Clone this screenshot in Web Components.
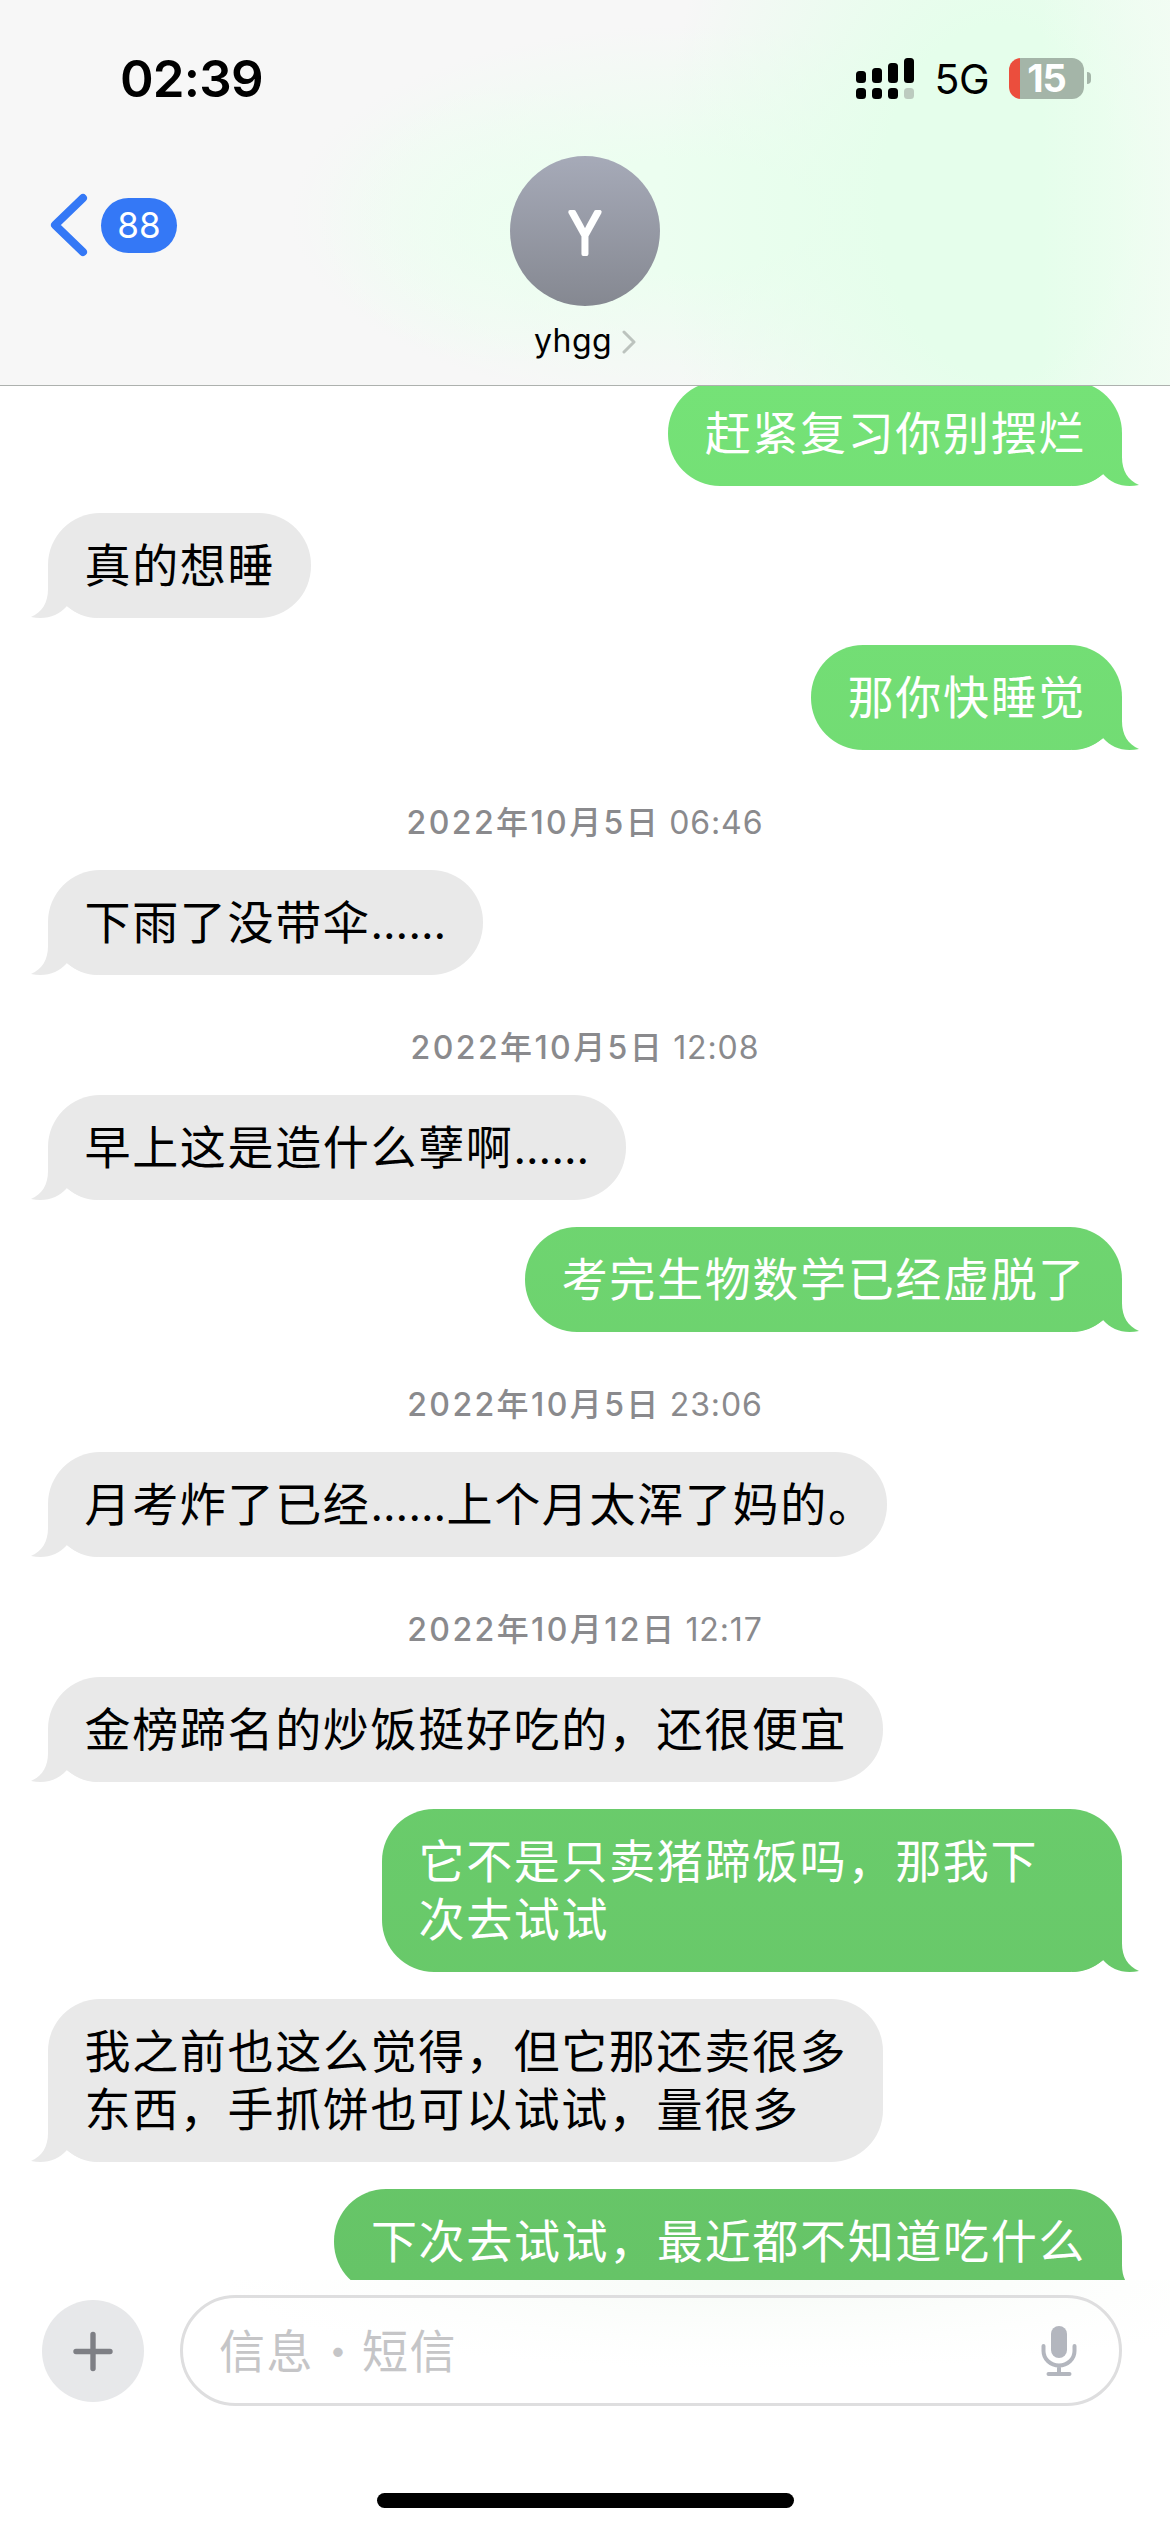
<!DOCTYPE html>
<html lang="zh-CN">
<head>
<meta charset="utf-8">
<title>yhgg</title>
<style>
  html, body { margin: 0; padding: 0; }
  body {
    width: 1170px;
    height: 2532px;
    overflow: hidden;
    background: #fff;
    color: #000;
    font-family: Inter, "Noto Sans CJK SC", sans-serif;
    -webkit-font-smoothing: antialiased;
  }
  chat-bubble i { font-style: normal; font-size: 43.5px; line-height: 0; letter-spacing: .4px; }
</style>
</head>
<body>
<message-screen>
  <status-bar slot="header" time="02:39" network="5G" battery="15"></status-bar>
  <contact-bar slot="header" unread="88" initial="Y" name="yhgg"></contact-bar>

  <chat-bubble from="me">赶紧复习你别摆烂</chat-bubble>
  <chat-bubble>真的想睡</chat-bubble>
  <chat-bubble from="me">那你快睡觉</chat-bubble>
  <chat-time time="06:46">2022年10月5日</chat-time>
  <chat-bubble>下雨了没带伞<i>……</i></chat-bubble>
  <chat-time time="12:08">2022年10月5日</chat-time>
  <chat-bubble>早上这是造什么孽啊<i>……</i></chat-bubble>
  <chat-bubble from="me">考完生物数学已经虚脱了</chat-bubble>
  <chat-time time="23:06">2022年10月5日</chat-time>
  <chat-bubble trim>月考炸了已经<i>……</i>上个月太浑了妈的。</chat-bubble>
  <chat-time time="12:17">2022年10月12日</chat-time>
  <chat-bubble>金榜蹄名的炒饭挺好吃的，还很便宜</chat-bubble>
  <chat-bubble from="me" wide>它不是只卖猪蹄饭吗，那我下<br>次去试试</chat-bubble>
  <chat-bubble>我之前也这么觉得，但它那还卖很多<br>东西，手抓饼也可以试试，量很多</chat-bubble>
  <chat-bubble from="me">下次去试试，最近都不知道吃什么</chat-bubble>

  <compose-bar slot="footer" placeholder="信息 • 短信"></compose-bar>
</message-screen>

<script>
(function () {
  'use strict';

  class MessageScreen extends HTMLElement {
    constructor() {
      super();
      this.attachShadow({ mode: 'open' }).innerHTML = `
        <style>
          :host {
            display: flex;
            flex-direction: column;
            width: 1170px;
            height: 2532px;
            overflow: hidden;
          }
          header {
            flex: none;
            height: 385px;
            border-bottom: 1px solid #adb1ae;
            margin-bottom: -5px;
            position: relative;
            z-index: 1;
            background:
              linear-gradient(90deg, transparent 1040px, rgba(243, 253, 244, .75) 1170px),
              radial-gradient(ellipse 340px 500px at 1000px 200px, #e5feeb 35%, rgba(229, 254, 235, 0) 100%),
              radial-gradient(ellipse 400px 190px at 690px 215px, #ecfef0 30%, rgba(236, 254, 240, 0) 100%),
              radial-gradient(ellipse 190px 140px at 510px 225px, #effdf2 10%, rgba(239, 253, 242, 0) 100%),
              #f7f7f7;
          }
          main {
            flex: 1;
            min-height: 0;
            display: flex;
            flex-direction: column;
            overflow: hidden;
          }
          footer { flex: none; height: 252px; }
        </style>
        <header><slot name="header"></slot></header>
        <main><slot></slot></main>
        <footer><slot name="footer"></slot></footer>
      `;
    }
  }

  class StatusBar extends HTMLElement {
    connectedCallback() {
      this.attachShadow({ mode: 'open' }).innerHTML = `
        <style>
          :host {
            display: flex;
            align-items: center;
            height: 156px;
            box-sizing: border-box;
            padding: 0 79px 0 120px;
          }
          .time { font-size: 51px; font-weight: 600; letter-spacing: -.8px; flex: 1; }
          .network { font-size: 41px; margin: 1px 20px 0 20px; letter-spacing: -.5px; }
          .battery {
            width: 75px;
            height: 41px;
            border-radius: 12px;
            background: linear-gradient(90deg, #eb4e3d 11px, #a4b5a8 11px);
            color: #fff;
            font-size: 38px;
            font-weight: 700;
            line-height: 41px;
            text-align: center;
            letter-spacing: -1px;
          }
          .nub { width: 4px; height: 12px; margin-left: 3px; border-radius: 0 4px 4px 0; background: #a4b5a8; }
          svg, .battery, .nub { flex: none; display: block; }
        </style>
        <span class="time">${this.getAttribute('time')}</span>
        <svg width="58" height="41" viewBox="0 0 58 41">
          <rect x="0" y="13" width="10" height="12" rx="3.5"/>
          <rect x="16" y="10" width="10" height="15" rx="3.5"/>
          <rect x="32" y="5" width="10" height="20" rx="3.5"/>
          <rect x="48" y="0" width="10" height="25" rx="3.5"/>
          <rect x="0" y="30" width="10" height="11" rx="3.5"/>
          <rect x="16" y="30" width="10" height="11" rx="3.5"/>
          <rect x="32" y="30" width="10" height="11" rx="3.5"/>
          <rect x="48" y="30" width="10" height="11" rx="3.5" fill="#bccbbf"/>
        </svg>
        <span class="network">${this.getAttribute('network')}</span>
        <span class="battery">${this.getAttribute('battery')}</span>
        <span class="nub"></span>
      `;
    }
  }

  class ContactBar extends HTMLElement {
    connectedCallback() {
      this.attachShadow({ mode: 'open' }).innerHTML = `
        <style>
          :host {
            display: grid;
            grid-template-columns: 1fr 150px 1fr;
            align-items: start;
          }
          .back { display: flex; align-items: center; padding: 37px 0 0 49px; gap: 13px; }
          .unread {
            width: 76px;
            height: 55px;
            border-radius: 27.5px;
            background: #3478f6;
            color: #fff;
            font-size: 35px;
            line-height: 55px;
            text-align: center;
          }
          .contact { display: flex; flex-direction: column; align-items: center; }
          .name { display: flex; align-items: center; margin-top: 15px; font-size: 32px; line-height: 40px; letter-spacing: .4px; }
          .name svg { margin: 2px 0 0 10px; }
          svg { display: block; flex: none; }
        </style>
        <div class="back">
          <svg width="39" height="64" viewBox="0 0 39 64" fill="none" stroke="#3478f6" stroke-width="8" stroke-linecap="round" stroke-linejoin="round">
            <path d="M34 5 6 32l28 27"/>
          </svg>
          <span class="unread">${this.getAttribute('unread')}</span>
        </div>
        <div class="contact">
          <svg width="150" height="150" viewBox="0 0 150 150">
            <defs>
              <linearGradient id="g" x1="0" y1="0" x2="0" y2="1">
                <stop offset="0" stop-color="#a6aab8"/>
                <stop offset="1" stop-color="#858891"/>
              </linearGradient>
            </defs>
            <circle cx="75" cy="75" r="75" fill="url(#g)"/>
            <text transform="translate(75 98) scale(.84 1)" text-anchor="middle" font-size="58" font-weight="300" fill="#fff"
              stroke="#fff" stroke-width="4.200" stroke-linejoin="round">${this.getAttribute('initial')}</text>
          </svg>
          <div class="name">${this.getAttribute('name')}
            <svg width="14" height="24" viewBox="0 0 14 24" fill="none" stroke="#bcc3be" stroke-width="3" stroke-linecap="round" stroke-linejoin="round">
              <path d="M2 2l10 10L2 22"/>
            </svg>
          </div>
        </div>
      `;
    }
  }

  class ChatBubble extends HTMLElement {
    constructor() {
      super();
      this.attachShadow({ mode: 'open' }).innerHTML = `
        <style>
          :host {
            --fill: #e9e9e9;
            display: block;
            flex: none;
            position: relative;
            box-sizing: border-box;
            align-self: flex-start;
            margin: 0 48px 27px;
            padding: 22.5px 36px 24.5px 36.5px;
            border-radius: 52px;
            background: var(--fill);
            font-size: 46px;
            line-height: 58px;
            letter-spacing: 1.67px;
            white-space: nowrap;
            text-spacing-trim: space-all;
          }
          :host([from="me"]) {
            --fill: linear-gradient(#78e87a, #64c065) fixed;
            align-self: flex-end;
            color: #fff;
          }
          :host([wide]) { width: 740px; }
          :host([trim]) { padding-right: 11px; }
          /* tail hangs outside the rounded body, mirrored for received messages */
          .tail {
            position: absolute;
            right: -17px;
            bottom: 0;
            width: 67px;
            height: 53px;
            background: var(--fill);
            clip-path: path("M0 0H50V24C50 38 56 47 67 52C52 55 40 51 31 41C22 49 12 53 0 53Z");
          }
          :host(:not([from="me"])) .tail { right: auto; left: -17px; transform: scaleX(-1); }
          .body { position: relative; }
        </style>
        <span class="tail"></span>
        <div class="body"><slot></slot></div>
      `;
    }
  }

  class ChatTime extends HTMLElement {
    constructor() {
      super();
      this.attachShadow({ mode: 'open' }).innerHTML = `
        <style>
          :host {
            display: block;
            flex: none;
            height: 40px;
            margin: 26px 0 27px;
            color: #8a8a8d;
            font-size: 32px;
            line-height: 40px;
            text-align: center;
            white-space: nowrap;
          }
          b { font-weight: 500; letter-spacing: 2.4px; }
          span { letter-spacing: .9px; }
        </style>
        <b><slot></slot></b> <span></span>
      `;
    }

    connectedCallback() {
      this.shadowRoot.querySelector('span').textContent = this.getAttribute('time');
    }
  }

  class ComposeBar extends HTMLElement {
    connectedCallback() {
      const [label, kind] = this.getAttribute('placeholder').split(' • ');
      this.attachShadow({ mode: 'open' }).innerHTML = `
        <style>
          :host {
            display: flex;
            flex-direction: column;
            align-items: center;
            height: 252px;
            background:
              radial-gradient(ellipse 540px 90px at 760px 0, #f7fbf7, rgba(253, 254, 253, .7) 75%, rgba(255, 255, 255, 0)),
              #fff;
          }
          .row { display: flex; align-items: center; width: 1170px; box-sizing: border-box; padding: 15px 48px 0 42px; gap: 36px; }
          .add { border-radius: 50%; background: #e7e8ea; }
          .field {
            flex: 1;
            display: flex;
            align-items: center;
            justify-content: space-between;
            box-sizing: border-box;
            height: 111px;
            padding: 0 42px 0 36px;
            border: 3px solid #dededf;
            border-radius: 55.5px;
            color: #c5c5c7;
            font-size: 46px;
            letter-spacing: 1.5px;
          }
          .hint { display: flex; align-items: center; margin-top: -6px; }
          .dot { width: 48px; font-size: 30px; text-align: center; letter-spacing: 0; margin-top: 5px; }
          .home { width: 417px; height: 15px; margin-top: 87px; border-radius: 7.5px; background: #000; }
          svg { display: block; flex: none; }
        </style>
        <div class="row">
          <svg class="add" width="102" height="102" viewBox="0 0 102 102" stroke="#7e7f85" stroke-width="5.4" stroke-linecap="round">
            <path d="M51 34.500v34M34 51.500h34"/>
          </svg>
          <div class="field">
            <div class="hint"><span>${label}</span><span class="dot">•</span><span>${kind}</span></div>
            <svg width="36" height="50" viewBox="0 0 36 50" fill="none" stroke="#b3b6be" stroke-width="4" stroke-linecap="round">
              <rect x="10" y="0" width="16" height="32" rx="8" fill="#b3b6be" stroke="none"/>
              <path d="M2.500 20v5a15.500 14.500 0 0 0 31 0v-5M18 40v7M7.500 48h21"/>
            </svg>
          </div>
        </div>
        <div class="home"></div>
      `;
    }
  }

  customElements.define('message-screen', MessageScreen);
  customElements.define('status-bar', StatusBar);
  customElements.define('contact-bar', ContactBar);
  customElements.define('chat-bubble', ChatBubble);
  customElements.define('chat-time', ChatTime);
  customElements.define('compose-bar', ComposeBar);
})();
</script>
</body>
</html>
